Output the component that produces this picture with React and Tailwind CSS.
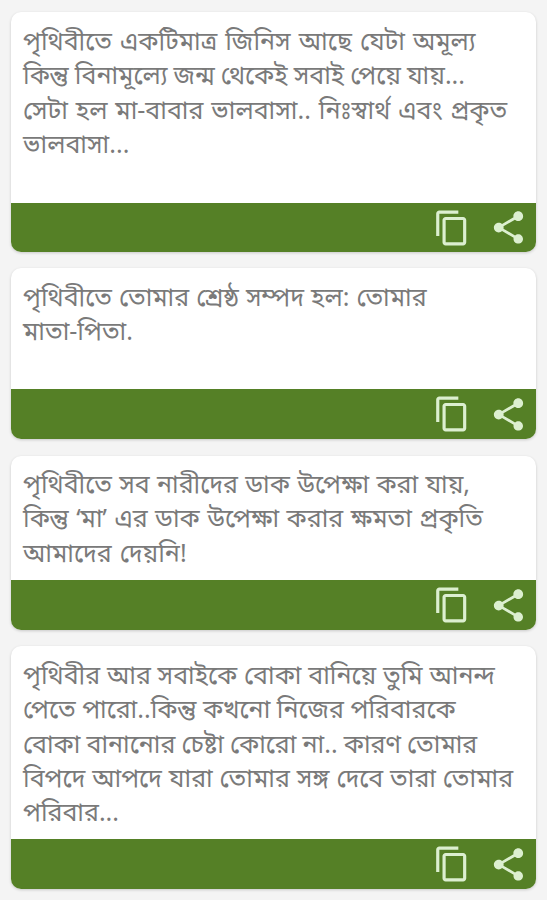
const cards = [
  {
    body: "h-[191px] pt-[11px]", gap: "mb-[16px]", foot: "h-[49px]",
    lines: [
      ["পৃথিবীতে একটিমাত্র জিনিস আছে যেটা অমূল্য", "[word-spacing:1.5px]"],
      ["কিন্তু বিনামূল্যে জন্ম থেকেই সবাই পেয়ে যায়...", "[word-spacing:-0.4px]"],
      ["সেটা হল মা-বাবার ভালবাসা.. নিঃস্বার্থ এবং প্রকৃত", "[word-spacing:1.4px]"],
      ["ভালবাসা...", ""],
    ],
  },
  {
    body: "h-[121px] pt-[11px]", gap: "mb-[17px]", foot: "h-[50px]",
    lines: [
      ["পৃথিবীতে তোমার শ্রেষ্ঠ সম্পদ হল: তোমার", "[word-spacing:0.5px]"],
      ["মাতা-পিতা.", ""],
    ],
  },
  {
    body: "h-[124px] pt-[10px]", gap: "mb-[16px]", foot: "h-[50px]",
    lines: [
      ["পৃথিবীতে সব নারীদের ডাক উপেক্ষা করা যায়,", "[word-spacing:0.8px]"],
      ["কিন্তু ‘মা’ এর ডাক উপেক্ষা করার ক্ষমতা প্রকৃতি", "[word-spacing:1px]"],
      ["আমাদের দেয়নি!", "[word-spacing:1.5px]"],
    ],
  },
  {
    body: "h-[193px] pt-[11px]", gap: "mb-0", foot: "h-[50px]",
    lines: [
      ["পৃথিবীর আর সবাইকে বোকা বানিয়ে তুমি আনন্দ", "[word-spacing:0.3px]"],
      ["পেতে পারো..কিন্তু কখনো নিজের পরিবারকে", ""],
      ["বোকা বানানোর চেষ্টা কোরো না.. কারণ তোমার", "[word-spacing:-0.4px]"],
      ["বিপদে আপদে যারা তোমার সঙ্গ দেবে তারা তোমার", "[word-spacing:0.4px]"],
      ["পরিবার...", ""],
    ],
  },
];

function CopyIcon() {
  return (
    <svg className="size-[38px]" viewBox="0 0 24 24" fill="currentColor">
      <path d="M16 1H4c-1.1 0-2 .9-2 2v14h2V3h12V1zm3 4H8c-1.1 0-2 .9-2 2v14c0 1.1.9 2 2 2h11c1.1 0 2-.9 2-2V7c0-1.1-.9-2-2-2zm0 16H8V7h11v14z" />
    </svg>
  );
}

function ShareIcon() {
  return (
    <svg className="size-[39px]" viewBox="0 0 24 24" fill="currentColor">
      <path d="M18 16.08c-.76 0-1.44.3-1.96.77L8.91 12.7c.05-.23.09-.46.09-.7s-.04-.47-.09-.7l7.05-4.11c.54.5 1.25.81 2.04.81 1.66 0 3-1.34 3-3s-1.34-3-3-3-3 1.34-3 3c0 .24.04.47.09.7L8.04 9.81C7.5 9.31 6.79 9 6 9c-1.66 0-3 1.34-3 3s1.34 3 3 3c.79 0 1.5-.31 2.04-.81l7.12 4.16c-.05.21-.08.43-.08.65 0 1.61 1.31 2.92 2.92 2.92s2.92-1.31 2.92-2.92-1.31-2.92-2.92-2.92z" />
    </svg>
  );
}

export default function App() {
  return (
    <main className="h-[900px] w-[547px] overflow-hidden bg-[#f4f4f4] px-[11px] pt-[12px] font-['Noto_Sans','Noto_Sans_Bengali',sans-serif]">
      {cards.map((card, i) => (
        <article key={i} className={`overflow-hidden rounded-[10px] bg-white shadow-[0_1px_3px_rgba(0,0,0,0.18)] ${card.gap}`}>
          <div className={`px-[12px] text-[25px] leading-[34.3px] text-[#7a7a7a] ${card.body}`}>
            {card.lines.map(([text, spacing]) => (
              <p key={text} className={`w-max whitespace-nowrap ${spacing}`}>{text}</p>
            ))}
          </div>
          <footer className={`flex items-center justify-end gap-[18px] bg-[#558026] pr-[8px] text-[#dcefd0] ${card.foot}`}>
            <CopyIcon />
            <ShareIcon />
          </footer>
        </article>
      ))}
    </main>
  );
}
